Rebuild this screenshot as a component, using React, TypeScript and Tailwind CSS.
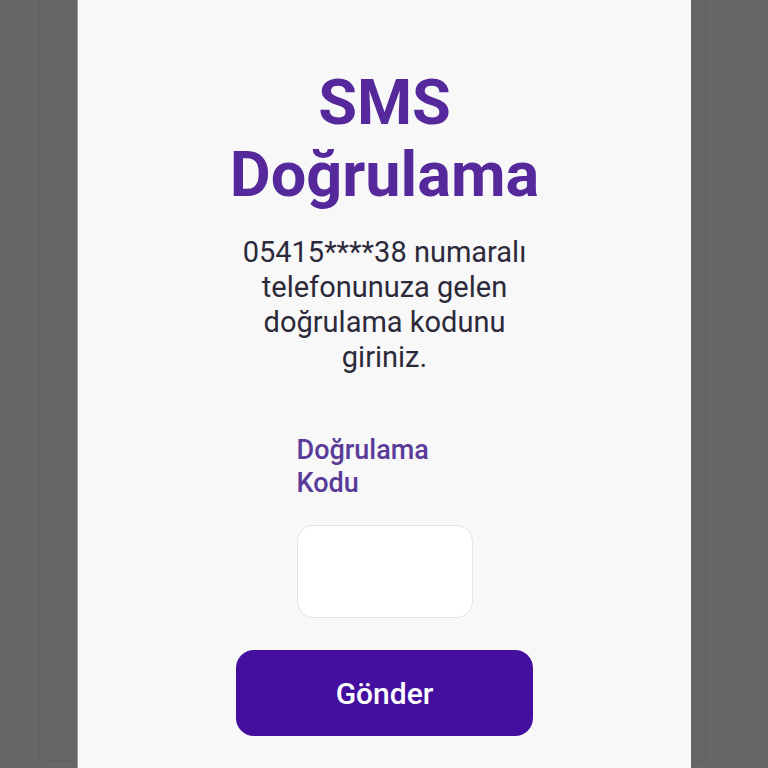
export default function App() {
    return (
        <div className="relative h-[768px] overflow-hidden bg-[#666666] font-['Roboto',sans-serif]">
            {/* faint edge of the page card behind the dialog */}
            <div className="absolute left-[39px] right-[62px] top-[-10px] bottom-[7px] rounded-b-md border border-[#5f5f5f]" />

            <div className="relative flex h-full justify-center">
                <div className="flex w-[614px] flex-col items-center border-l border-[#9a9a9a] bg-[#f8f8f9] pt-[67px]">
                    <div className="flex w-[297px] flex-col items-center">
                        <h1 className="whitespace-nowrap text-center text-[63px] font-bold leading-[72px] text-[#55289b]">
                            SMS
                            <br />
                            Doğrulama
                        </h1>

                        <p className="mt-[24px] text-center text-[29px] leading-[35px] text-[#2c2a3a]">
                            05415****38 numaralı telefonunuza gelen doğrulama kodunu giriniz.
                        </p>

                        <div className="mt-[59px] w-[176px]">
                            <label className="block text-[27px] font-medium leading-[33px] text-[#5a3b98]">
                                Doğrulama Kodu
                            </label>
                            <input
                                type="text"
                                className="mt-[25px] h-[93px] w-full rounded-2xl border border-[#e4e4e6] bg-white px-3 text-center text-2xl outline-none"
                            />
                        </div>

                        <button className="mt-[32px] h-[86px] w-full rounded-[18px] bg-[#440f9e] text-[30px] font-medium text-white">
                            Gönder
                        </button>
                    </div>
                </div>
            </div>
        </div>
    );
}
